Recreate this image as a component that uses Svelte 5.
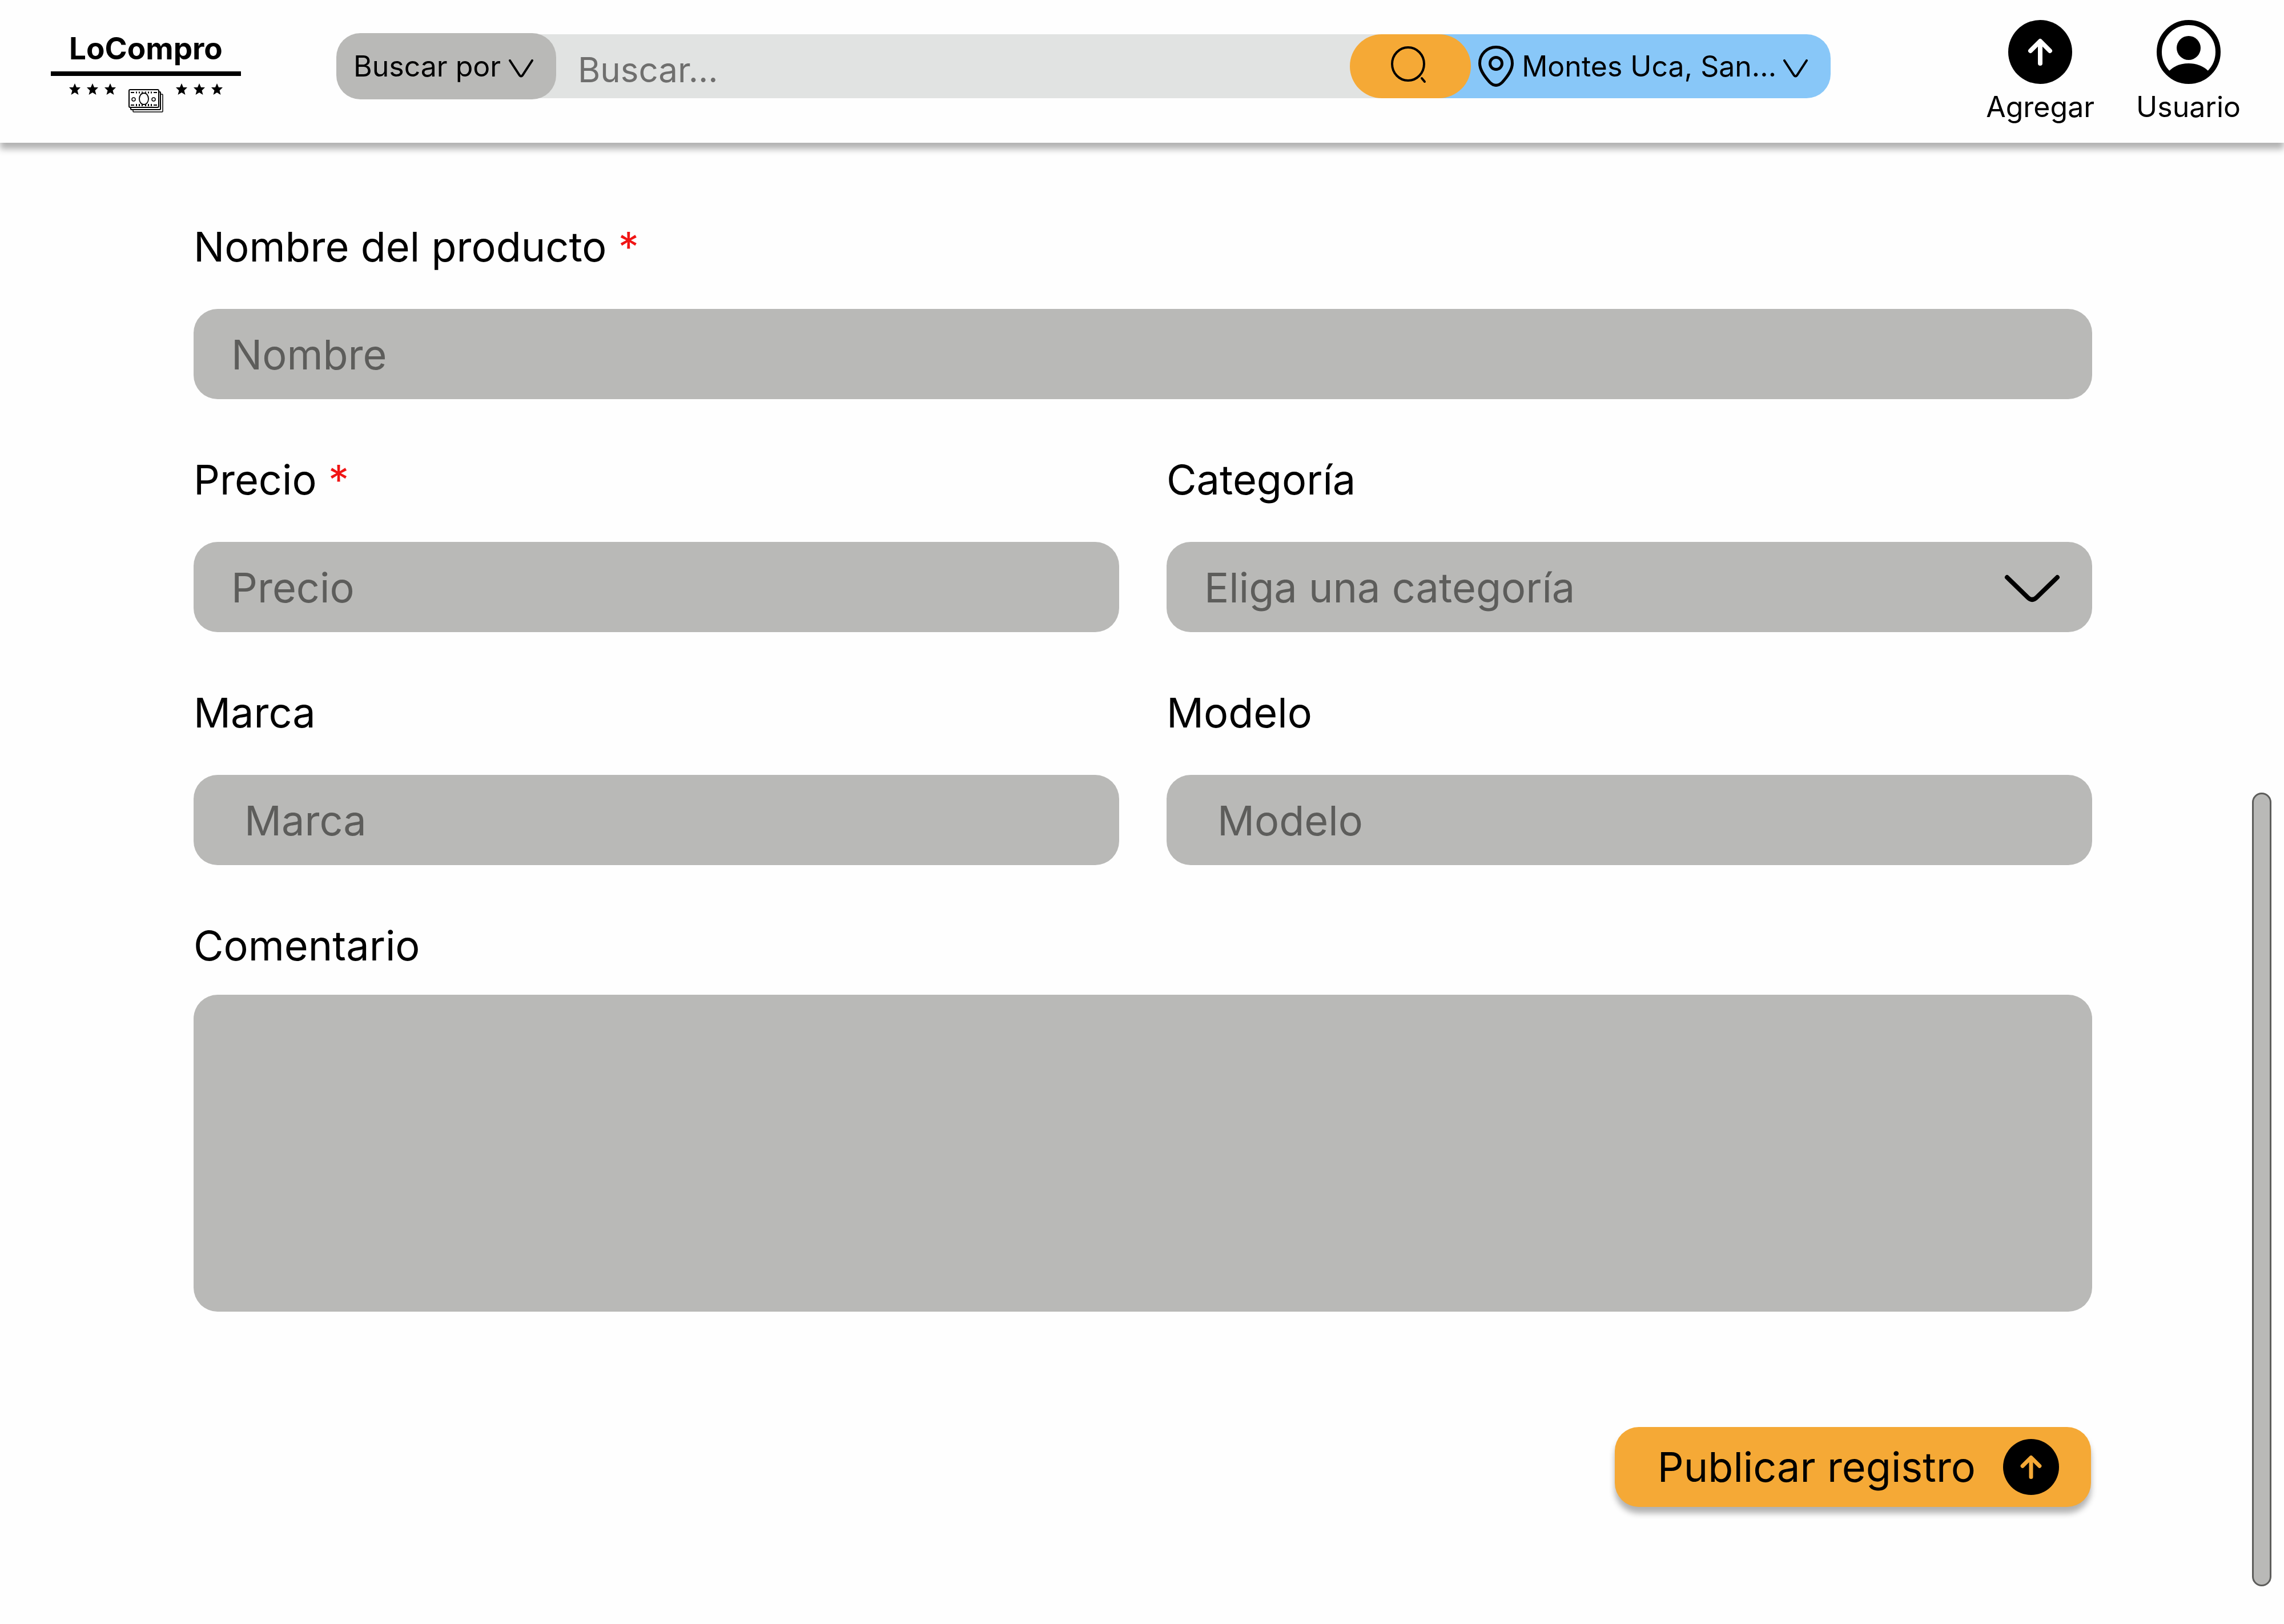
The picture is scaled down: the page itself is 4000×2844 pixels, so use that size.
<script lang="ts">
  let nombre = $state('');
  let precio = $state('');
  let categoria = $state('');
  let marca = $state('');
  let modelo = $state('');
  let comentario = $state('');
  let busqueda = $state('');

  // Horizontal centres of the logo's stars.
  const stars = [42, 73, 104, 229, 260, 291];
</script>

{#snippet chevron(cls: string)}
  <svg class={cls} viewBox="0 0 98 50" aria-hidden="true">
    <path d="M5 5 L41 40 Q49 48 57 40 L93 5" fill="none" stroke="currentColor" stroke-width="8" stroke-linecap="round" />
  </svg>
{/snippet}

{#snippet smallChevron()}
  <svg class="small-chevron" viewBox="0 0 43 32" aria-hidden="true">
    <path d="M2 2 L19 28 Q21.500 31 24 28 L41 2" fill="none" stroke="currentColor" stroke-width="4" stroke-linecap="round" />
  </svg>
{/snippet}

{#snippet arrowCircle(cls: string)}
  <svg class={cls} viewBox="0 0 112 112" aria-hidden="true">
    <circle cx="56" cy="56" r="56" fill="#000" />
    <path d="M56 76 V38 M39 54 L56 37 L73 54" fill="none" stroke="currentColor" stroke-width="8" stroke-linecap="round" stroke-linejoin="round" />
  </svg>
{/snippet}

<div class="page">
  <header>
    <a class="logo" href="#inicio" aria-label="LoCompro">
      <span>LoCompro</span>
      <svg viewBox="0 0 333 72" aria-hidden="true">
        <rect width="333" height="8" />
        {#each stars as x}
          <path transform="translate({x} 32)" d="M0 -11 L3 -4 H10 L4.500 1.500 L6.500 9 L0 5 L-6.500 9 L-4.500 1.500 L-10 -4 H-3 Z" />
        {/each}
        <g fill="#fff" stroke="#000">
          <rect x="144" y="40" width="52" height="31" rx="1" stroke-width="1.5" />
          <rect x="140" y="36" width="52" height="31" rx="1" stroke-width="2" />
          <rect x="137" y="32" width="52" height="31" rx="2" stroke-width="2" />
          <ellipse cx="163" cy="48" rx="8" ry="10" stroke-width="1.8" />
          <circle cx="145" cy="49" r="3" stroke-width="1.5" />
          <circle cx="180" cy="49" r="3" stroke-width="1.5" />
          <path d="M140 37 H146 M180 37 H186 M140 59 H146 M180 59 H186" stroke-width="2" />
          <path d="M150 35.500 V38.500 M155 35.500 V38.500 M160 35.500 V37.500 M166 35.500 V37.500 M171 35.500 V38.500 M176 35.500 V38.500 M150 57 V61 M155 57 V61 M160 58 V61 M166 58 V61 M171 57 V61 M176 57 V61" stroke-width="2" />
        </g>
      </svg>
    </a>

    <form class="search" role="search">
      <div class="stack filter">
        <select aria-label="Buscar por">
          <option>Buscar por</option>
        </select>
        {@render smallChevron()}
      </div>
      <input class="query" type="search" placeholder="Buscar..." aria-label="Buscar" bind:value={busqueda} />
      <button class="go" type="button" aria-label="Buscar">
        <svg viewBox="0 0 64 68" aria-hidden="true">
          <ellipse cx="30" cy="32" rx="28" ry="29" fill="none" stroke="#000" stroke-width="4" />
          <path d="M54 57 L59 63" stroke="#000" stroke-width="4" stroke-linecap="round" />
        </svg>
      </button>
      <div class="stack place">
        <select aria-label="Ubicación">
          <option>Montes Uca, San...</option>
        </select>
        <svg class="pin" viewBox="0 0 62 72" aria-hidden="true">
          <path d="M31 2.500 C15 2.500 2.500 15 2.500 31 C2.500 43 11 54 20 64 Q31 75 42 64 C51 54 59.500 43 59.500 31 C59.500 15 47 2.500 31 2.500 Z" fill="none" stroke="#000" stroke-width="5" />
          <circle cx="31" cy="31" r="10.500" fill="none" stroke="#000" stroke-width="5" />
        </svg>
        {@render smallChevron()}
      </div>
    </form>

    <nav>
      <a href="#agregar">
        {@render arrowCircle('nav-icon')}
        <span>Agregar</span>
      </a>
      <a href="#usuario">
        <svg class="nav-icon" viewBox="0 0 112 112" aria-hidden="true">
          <circle cx="56" cy="56" r="51.500" fill="#fff" stroke="#000" stroke-width="9" />
          <circle cx="56" cy="49" r="21" />
          <path d="M22 89 C31 80 43 76 56 76 C69 76 81 80 90 89 L92 97 A54 54 0 0 1 20 97 Z" />
        </svg>
        <span>Usuario</span>
      </a>
    </nav>
  </header>

  <main>
    <form class="product">
      <div class="field wide">
        <label for="nombre">Nombre del producto <em>*</em></label>
        <input id="nombre" placeholder="Nombre" bind:value={nombre} />
      </div>
      <div class="field">
        <label for="precio">Precio <em>*</em></label>
        <input id="precio" placeholder="Precio" bind:value={precio} />
      </div>
      <div class="field">
        <label for="categoria">Categoría</label>
        <div class="stack">
          <select id="categoria" bind:value={categoria}>
            <option value="">Eliga una categoría</option>
          </select>
          {@render chevron('big-chevron')}
        </div>
      </div>
      <div class="field inset">
        <label for="marca">Marca</label>
        <input id="marca" placeholder="Marca" bind:value={marca} />
      </div>
      <div class="field inset">
        <label for="modelo">Modelo</label>
        <input id="modelo" placeholder="Modelo" bind:value={modelo} />
      </div>
      <div class="field wide comment">
        <label for="comentario">Comentario</label>
        <textarea id="comentario" bind:value={comentario}></textarea>
      </div>
      <div class="wide actions">
        <button class="publish" type="button">
          <span>Publicar registro</span>
          {@render arrowCircle('publish-icon')}
        </button>
      </div>
    </form>
  </main>

  <div class="scroll-thumb" aria-hidden="true"></div>
</div>

<style>
  :global(body) {
    margin: 0;
    background: #fefefe;
  }
  .page {
    position: relative;
    min-height: 100vh;
    box-sizing: border-box;
    font-family: Inter, 'Liberation Sans', sans-serif;
    color: #000;
  }
  .page :is(input, select, textarea, button) {
    box-sizing: border-box;
    min-width: 0;
    margin: 0;
    border: 0;
    font-family: inherit;
    color: #000;
    appearance: none;
  }
  svg {
    display: block;
    flex: none;
  }
  a {
    color: inherit;
    text-decoration: none;
  }
  .stack {
    display: grid;
    align-items: center;
  }
  .stack > :global(*) {
    grid-area: 1 / 1;
  }
  .stack :global(svg) {
    pointer-events: none;
  }

  header {
    display: flex;
    align-items: flex-start;
    box-sizing: border-box;
    min-height: 250px;
    padding: 35px 76px 0 89px;
    background: #fefefe;
    box-shadow: 0 11px 11px rgba(0, 0, 0, 0.3);
  }
  .logo {
    width: 333px;
    padding-top: 20px;
  }
  .logo span {
    display: block;
    font-size: 53px;
    line-height: 60px;
    font-weight: 700;
    text-align: center;
    margin-bottom: 10px;
  }
  .logo svg {
    width: 333px;
    height: 72px;
  }

  .search {
    display: flex;
    align-items: center;
    flex: 1;
    margin: 23px 272px 0 167px;
  }
  .search select {
    width: 100%;
    background: transparent;
    font-size: 50px;
    line-height: 64px;
  }
  .filter {
    position: relative;
    z-index: 1;
    width: 385px;
    height: 116px;
    border-radius: 42px;
    background: #b9b9b7;
  }
  .filter select {
    height: 116px;
    padding: 0 84px 0 30px;
  }
  .search .small-chevron {
    justify-self: end;
    width: 43px;
    height: 32px;
    margin-right: 40px;
    margin-top: 8px;
  }
  .page .query {
    flex: 1;
    height: 112px;
    margin: 0 -56px;
    padding: 12px 60px 0 94px;
    background: #e1e3e2;
    font-size: 60px;
    outline-offset: -4px;
  }
  .query::placeholder {
    color: #6f6f6e;
    opacity: 1;
  }
  .go {
    position: relative;
    z-index: 1;
    display: grid;
    place-items: center;
    flex: none;
    width: 212px;
    height: 112px;
    padding: 0 4px 4px 0;
    border-radius: 56px;
    background: #f5a936;
  }
  .go svg {
    width: 64px;
    height: 68px;
  }
  .page .place {
    flex: none;
    width: 686px;
    height: 112px;
    margin-left: -56px;
    border-radius: 0 42px 42px 0;
    background: #88c7f8;
  }
  .place select {
    height: 112px;
    padding: 0 60px 0 145px;
  }
  .pin {
    width: 62px;
    height: 72px;
    margin-left: 69px;
  }

  nav {
    display: flex;
    gap: 73px;
  }
  nav a {
    display: flex;
    flex-direction: column;
    align-items: center;
    gap: 8px;
    color: #fff;
  }
  nav span {
    color: #000;
    font-size: 50px;
    line-height: 64px;
  }
  nav .nav-icon {
    width: 112px;
    height: 112px;
  }

  main {
    padding: 138px 336px 205px 339px;
  }
  .product {
    display: grid;
    grid-template-columns: 1fr 1fr;
    column-gap: 83px;
    row-gap: 97px;
  }
  .field {
    display: grid;
    row-gap: 65px;
  }
  .wide {
    grid-column: 1 / -1;
  }
  .comment {
    row-gap: 42px;
  }
  label {
    font-size: 72px;
    line-height: 88px;
  }
  em {
    font-style: normal;
    color: #f01414;
  }
  .field input,
  .field select,
  textarea {
    width: 100%;
    height: 158px;
    padding: 0 66px;
    border-radius: 42px;
    background: #b9b9b7;
    font-size: 72px;
  }
  .page .field select {
    color: #5d5d5b;
  }
  .field input::placeholder {
    color: #5d5d5b;
    opacity: 1;
  }
  .inset input {
    padding: 0 89px;
  }
  .page textarea {
    display: block;
    height: 555px;
    padding: 40px 66px;
    resize: none;
  }
  .field :global(.big-chevron) {
    justify-self: end;
    width: 98px;
    height: 50px;
    margin-right: 56px;
    margin-top: 6px;
  }
  .actions {
    display: flex;
    justify-content: flex-end;
    padding: 105px 2px 0 0;
  }
  .publish {
    display: flex;
    align-items: center;
    gap: 48px;
    height: 140px;
    padding: 0 56px 0 75px;
    border-radius: 42px;
    background: #f5a936;
    box-shadow: 0 11px 11px rgba(0, 0, 0, 0.3);
    font-size: 72px;
    line-height: 88px;
  }
  .publish :global(.publish-icon) {
    width: 98px;
    height: 98px;
    color: #f5a936;
  }

  .scroll-thumb {
    position: absolute;
    top: 1388px;
    right: 22px;
    bottom: 66px;
    width: 34px;
    box-sizing: border-box;
    border: 3px solid #5d5d5b;
    border-radius: 17px;
    background: #b9b9b7;
  }
</style>
